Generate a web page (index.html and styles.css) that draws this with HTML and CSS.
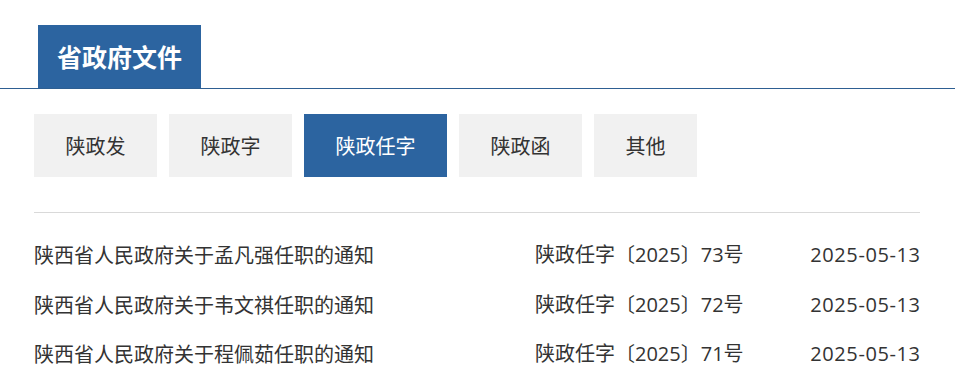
FILE: index.html
```html
<!DOCTYPE html>
<html lang="zh-CN">
<head>
<meta charset="utf-8">
<title>省政府文件</title>
<link rel="stylesheet" href="styles.css">
</head>
<body>
<div class="page">
  <div class="head">
    <div class="head-tab">省政府文件</div>
  </div>
  <div class="tabs">
    <div class="tab">陕政发</div>
    <div class="tab">陕政字</div>
    <div class="tab active">陕政任字</div>
    <div class="tab">陕政函</div>
    <div class="tab">其他</div>
  </div>
  <div class="list">
    <div class="row"><span class="title">陕西省人民政府关于孟凡强任职的通知</span><span class="num">陕政任字〔2025〕73号</span><span class="date">2025-05-13</span></div>
    <div class="row"><span class="title">陕西省人民政府关于韦文祺任职的通知</span><span class="num">陕政任字〔2025〕72号</span><span class="date">2025-05-13</span></div>
    <div class="row"><span class="title">陕西省人民政府关于程佩茹任职的通知</span><span class="num">陕政任字〔2025〕71号</span><span class="date">2025-05-13</span></div>
  </div>
</div>
</body>
</html>
```
FILE: styles.css
```css
* { box-sizing: border-box; }
html, body { margin: 0; padding: 0; background: #fff; }
body {
  font-family: "Noto Sans CJK SC", "Noto Sans", sans-serif;
  color: #333;
}
.page { padding-top: 25px; }
.head {
  display: flex;
  padding-left: 38px;
  border-bottom: 1px solid #2e5f92;
}
.head-tab {
  background: #2c64a0;
  color: #fff;
  font-size: 25px;
  font-weight: 700;
  height: 63px;
  line-height: 63px;
  padding: 0 19px;
}
.tabs {
  display: flex;
  gap: 12px;
  padding: 25px 34px 0;
}
.tab {
  background: #f1f1f1;
  font-size: 20px;
  height: 63px;
  line-height: 63px;
  padding: 0 31.5px;
  color: #333;
}
.tab.active {
  background: #2c64a0;
  color: #fff;
}
.list {
  margin: 35px 35px 0 34px;
  border-top: 1px solid #d9d9d9;
  padding-top: 17px;
}
.row {
  display: grid;
  grid-template-columns: 501px 1fr auto;
  font-size: 20px;
  height: 49.5px;
  line-height: 49.5px;
  color: #333;
  white-space: nowrap;
}
.num {
  font-family: "Open Sans", "Noto Sans CJK SC", sans-serif;
}
.date {
  font-family: "Open Sans", "Noto Sans CJK SC", sans-serif;
  text-align: right;
  letter-spacing: 0.6px;
  margin-right: -0.6px;
}
```
